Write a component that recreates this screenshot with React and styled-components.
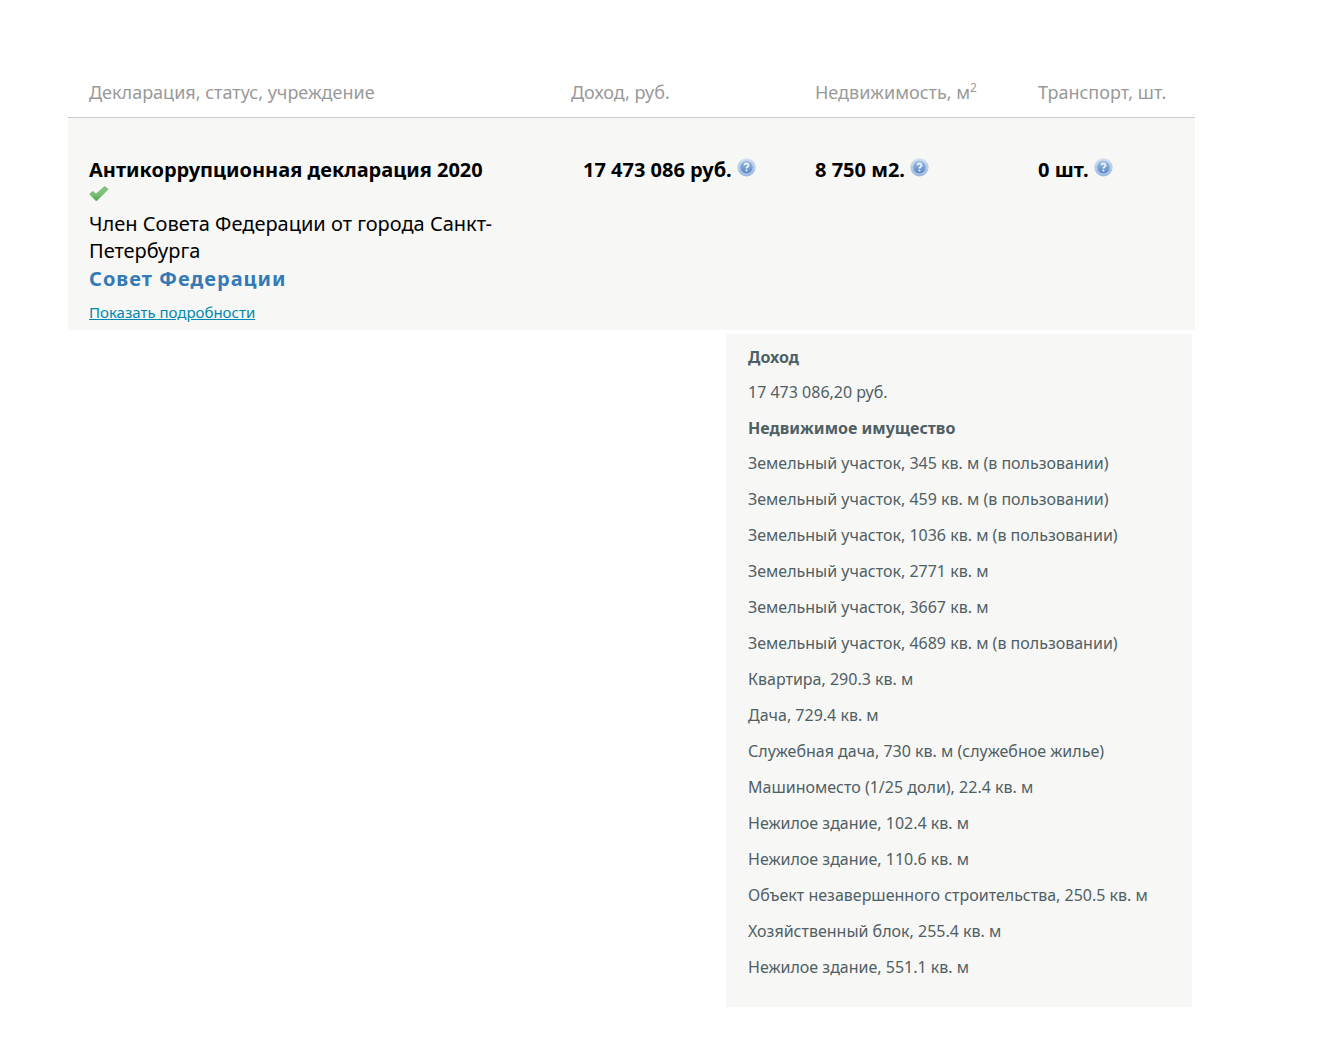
import React from 'react';
import styled, { createGlobalStyle } from 'styled-components';

const GlobalStyle = createGlobalStyle`
  body {
    margin: 0;
    background-color: #ffffff;
    color: #000000;
    font-family: "Noto Sans", "Open Sans", sans-serif;
  }
`;

const Page = styled.main`
  padding: 68px 133px 48px 68px;
`;

const DeclarationTable = styled.table`
  width: 100%;
  table-layout: fixed;
  border-collapse: collapse;
`;

const Column = styled.col`
  width: ${(props) => props.$width};
`;

const HeadCell = styled.th`
  height: 49px;
  padding: 0 0 0 21px;
  box-sizing: border-box;
  border-bottom: 1px solid #cccccc;
  color: #999999;
  font-size: 18px;
  font-weight: 400;
  line-height: 24px;
  text-align: left;
  white-space: nowrap;

  sup {
    font-size: 12px;
    line-height: 0;
  }
`;

const Cell = styled.td`
  padding: 40px 0 6px ${(props) => props.$indent || '21px'};
  background-color: #f7f7f6;
  font-size: 20px;
  line-height: 24px;
  vertical-align: top;
`;

const MainCell = styled(Cell)`
  padding-right: 40px;
`;

const Title = styled.h2`
  margin: 0;
  font-size: 20px;
  font-weight: 700;
  line-height: 24px;
`;

const Status = styled.p`
  margin: 8px 0 0;
  font-size: 20px;
  line-height: 27px;
`;

const Office = styled.a`
  display: block;
  color: #337ab7;
  font-size: 20px;
  font-weight: 700;
  letter-spacing: 1px;
  line-height: 29px;
  text-decoration: none;
`;

const MoreLink = styled.a`
  display: inline-block;
  margin-top: 7px;
  color: #0088b0;
  font-size: 15px;
  line-height: 24px;
`;

const Amount = styled.div`
  display: flex;
  gap: 5px;
  font-weight: 700;
  white-space: nowrap;
`;

const HelpButton = styled.button`
  width: 19px;
  height: 19px;
  padding: 0;
  border: 0;
  background: none;
  cursor: pointer;

  svg {
    display: block;
  }
`;

const CheckIcon = styled.svg`
  display: block;
  width: 20px;
  height: 16px;
  margin: 4px 0;
`;

const Details = styled.section`
  box-sizing: border-box;
  width: 466px;
  margin: 4px 3px 0 auto;
  padding: 11px 22px 16px;
  background-color: #f7f7f6;
  color: #4f6064;
  font-size: 16px;
`;

const DetailsTitle = styled.h3`
  margin: 0;
  font-size: 16px;
  line-height: 24px;
  padding-bottom: 11px;
`;

const DetailsList = styled.ul`
  margin: 0;
  padding: 0;
  list-style: none;

  li {
    line-height: 24px;
    padding-bottom: ${(props) => props.$space};
  }
`;

const property = [
  'Земельный участок, 345 кв. м (в пользовании)',
  'Земельный участок, 459 кв. м (в пользовании)',
  'Земельный участок, 1036 кв. м (в пользовании)',
  'Земельный участок, 2771 кв. м',
  'Земельный участок, 3667 кв. м',
  'Земельный участок, 4689 кв. м (в пользовании)',
  'Квартира, 290.3 кв. м',
  'Дача, 729.4 кв. м',
  'Служебная дача, 730 кв. м (служебное жилье)',
  'Машиноместо (1/25 доли), 22.4 кв. м',
  'Нежилое здание, 102.4 кв. м',
  'Нежилое здание, 110.6 кв. м',
  'Объект незавершенного строительства, 250.5 кв. м',
  'Хозяйственный блок, 255.4 кв. м',
  'Нежилое здание, 551.1 кв. м',
];

function Help({ label }) {
  return (
    <HelpButton type="button" aria-label={label}>
      <svg width="19" height="19" viewBox="0 0 19 19">
        <defs>
          <linearGradient id="helpRing" x1="0" y1="0" x2="0" y2="1">
            <stop offset="0" stopColor="#d5e1f1" />
            <stop offset="1" stopColor="#9ab8dc" />
          </linearGradient>
          <linearGradient id="helpFill" x1="0" y1="0" x2="0" y2="1">
            <stop offset="0" stopColor="#9dbbdf" />
            <stop offset="1" stopColor="#5787c0" />
          </linearGradient>
        </defs>
        <circle cx="9.5" cy="9.3" r="9.1" fill="url(#helpRing)" />
        <circle cx="9.5" cy="9.3" r="6.6" fill="url(#helpFill)" stroke="#b9cfe9" strokeWidth="0.8" />
        <path
          d="M7.5 7.3C7.5 4.9 11.5 4.9 11.5 7.2C11.5 8.8 9.5 8.8 9.5 10.5"
          fill="none"
          stroke="#edf3fb"
          strokeWidth="1.8"
        />
        <circle cx="9.5" cy="12.6" r="1" fill="#edf3fb" />
      </svg>
    </HelpButton>
  );
}

function App() {
  return (
    <>
      <GlobalStyle />
      <Page>
        <DeclarationTable>
          <colgroup>
            <Column />
            <Column $width="244px" />
            <Column $width="223px" />
            <Column $width="178px" />
          </colgroup>
          <thead>
            <tr>
              <HeadCell>Декларация, статус, учреждение</HeadCell>
              <HeadCell>Доход, руб.</HeadCell>
              <HeadCell>Недвижимость, м<sup>2</sup></HeadCell>
              <HeadCell>Транспорт, шт.</HeadCell>
            </tr>
          </thead>
          <tbody>
            <tr>
              <MainCell>
                <Title>Антикоррупционная декларация 2020</Title>
                <CheckIcon viewBox="0 0 20 16" role="img" aria-label="Проверено">
                  <defs>
                    <linearGradient id="check" x1="0" y1="0" x2="0" y2="1">
                      <stop offset="0" stopColor="#86c983" />
                      <stop offset="0.6" stopColor="#74bf70" />
                      <stop offset="1" stopColor="#4a9a4c" />
                    </linearGradient>
                  </defs>
                  <path
                    d="M0.8 8.2L3.6 5.4L7 8.2L15.6 0.6L19 3.3L7.4 15Z"
                    fill="url(#check)"
                    stroke="#6cb46b"
                    strokeWidth="0.9"
                    strokeLinejoin="round"
                  />
                </CheckIcon>
                <Status>Член Совета Федерации от города Санкт-Петербурга</Status>
                <Office href="#office">Совет Федерации</Office>
                <MoreLink href="#details">Показать подробности</MoreLink>
              </MainCell>
              <Cell $indent="33px">
                <Amount>17 473 086 руб. <Help label="Доход" /></Amount>
              </Cell>
              <Cell>
                <Amount>8 750 м2. <Help label="Недвижимость" /></Amount>
              </Cell>
              <Cell>
                <Amount>0 шт. <Help label="Транспорт" /></Amount>
              </Cell>
            </tr>
          </tbody>
        </DeclarationTable>
        <Details id="details">
          <DetailsTitle>Доход</DetailsTitle>
          <DetailsList $space="12px">
            <li>17 473 086,20 руб.</li>
          </DetailsList>
          <DetailsTitle>Недвижимое имущество</DetailsTitle>
          <DetailsList $space="12px">
            {property.map((item) => (
              <li key={item}>{item}</li>
            ))}
          </DetailsList>
        </Details>
      </Page>
    </>
  );
}

export default App;
